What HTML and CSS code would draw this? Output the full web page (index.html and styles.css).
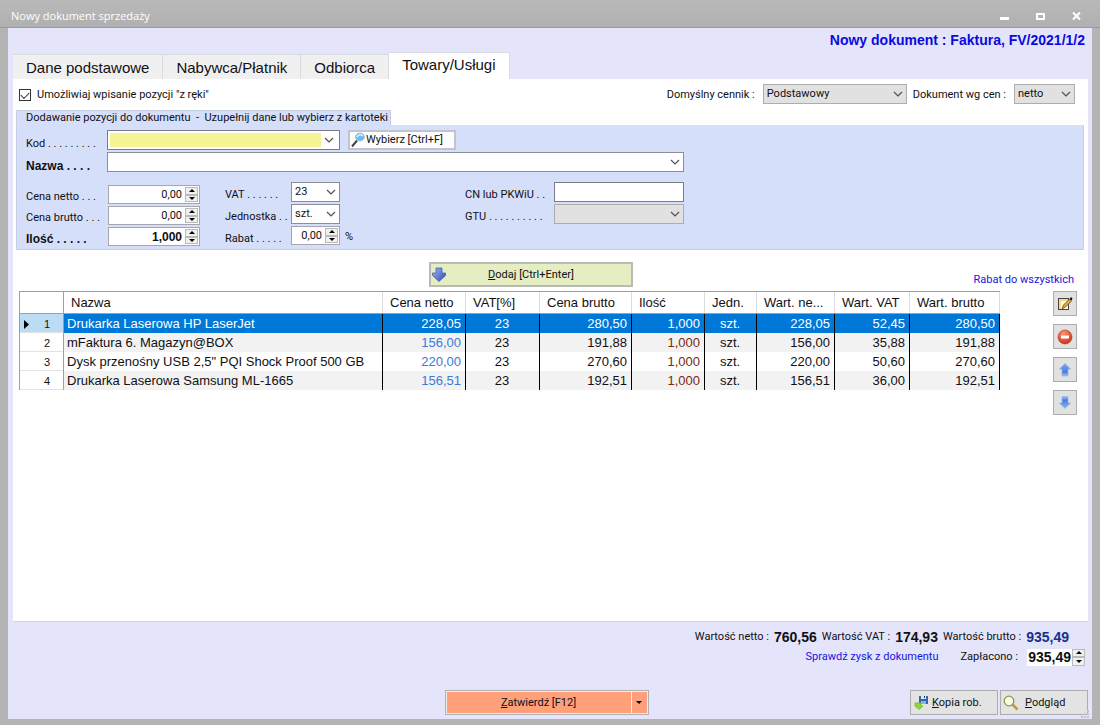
FILE: index.html
```html
<!DOCTYPE html>
<html lang="pl">
<head>
<meta charset="utf-8">
<title>Nowy dokument sprzedaży</title>
<link rel="stylesheet" href="styles.css">
</head>
<body>
<svg class="defs" width="0" height="0" aria-hidden="true">
  <defs>
    <linearGradient id="blue" x1="0" y1="0" x2="1" y2="1"><stop offset="0" stop-color="#a4b8f0"/><stop offset="1" stop-color="#2c48b8"/></linearGradient>
    <linearGradient id="up" x1="0" y1="0" x2="0" y2="1"><stop offset="0" stop-color="#7ea8ec"/><stop offset=".7" stop-color="#4a7cdc"/><stop offset="1" stop-color="#a9c6f4"/></linearGradient>
    <linearGradient id="down" x1="0" y1="0" x2="0" y2="1"><stop offset="0" stop-color="#a9c6f4"/><stop offset=".3" stop-color="#4a7cdc"/><stop offset="1" stop-color="#8db6f0"/></linearGradient>
    <radialGradient id="red" cx=".4" cy=".25" r=".8"><stop offset="0" stop-color="#ff9470"/><stop offset="1" stop-color="#cc2a14"/></radialGradient>
    <symbol id="chevron" viewBox="0 0 10 6"><path d="M1 1l4 4 4-4" fill="none" stroke="#505050" stroke-width="1.2"/></symbol>
    <symbol id="tri-up" viewBox="0 0 6 3"><path d="M3 0l3 3H0z"/></symbol>
    <symbol id="tri-down" viewBox="0 0 6 3"><path d="M0 0h6L3 3z"/></symbol>
  </defs>
</svg>

<header class="titlebar">
  <h1 class="titlebar-text">Nowy dokument sprzedaży</h1>
  <div class="window-buttons">
    <button type="button" aria-label="Minimalizuj"><svg width="10" height="10"><rect x="1" y="6" width="9" height="3" fill="#fff"/></svg></button>
    <button type="button" aria-label="Maksymalizuj"><svg width="10" height="10"><rect x="2" y="3" width="7" height="5" fill="none" stroke="#fff" stroke-width="2"/></svg></button>
    <button type="button" aria-label="Zamknij"><svg width="10" height="10"><path d="M2 1.500l7 7M9 1.500l-7 7" stroke="#fff" stroke-width="2"/></svg></button>
  </div>
</header>

<main class="window">
  <p class="doc-title">Nowy dokument : Faktura, FV/2021/1/2</p>
  <div class="tabs" role="tablist">
    <button type="button" role="tab" class="tab">Dane podstawowe</button>
    <button type="button" role="tab" class="tab">Nabywca/Płatnik</button>
    <button type="button" role="tab" class="tab">Odbiorca</button>
    <button type="button" role="tab" class="tab active" aria-selected="true">Towary/Usługi</button>
  </div>

  <section class="page">
    <div class="options">
      <label class="check"><input type="checkbox" checked><span>Umożliwiaj wpisanie pozycji "z ręki"</span></label>
      <div class="options-right">
        <label for="pricelist">Domyślny cennik :</label>
        <span class="select gray w-pricelist"><select id="pricelist"><option>Podstawowy</option></select><svg><use href="#chevron"/></svg></span>
        <label for="basis">Dokument wg cen :</label>
        <span class="select gray w-basis"><select id="basis"><option>netto</option></select><svg><use href="#chevron"/></svg></span>
      </div>
    </div>

    <h2 class="group-tab">Dodawanie pozycji do dokumentu&nbsp; -&nbsp; Uzupełnij dane lub wybierz z kartoteki</h2>
    <form class="group">
      <div class="row">
        <label for="code" class="c1">Kod . . . . . . . . .</label>
        <span class="combo"><input id="code" type="text"><button type="button" aria-label="Rozwiń"><svg width="10" height="6"><use href="#chevron"/></svg></button></span>
        <button type="button" class="pick">
          <svg width="14" height="16" viewBox="0 0 14 16"><path d="M1 14.500L6 8.500" stroke="#444" stroke-width="2"/><ellipse cx="9" cy="5" rx="4.500" ry="4" fill="#6fb8e8" stroke="#a9cbe0"/><path d="M6 5q3-4 6-1" fill="none" stroke="#dff2ff" stroke-width="1.500"/></svg>
          <span>Wybierz [Ctrl+F]</span>
        </button>
      </div>
      <div class="row">
        <label for="name" class="c1 bold">Nazwa . . . .</label>
        <span class="select w-name"><select id="name"><option></option></select><svg><use href="#chevron"/></svg></span>
      </div>
      <div class="fields">
        <div class="col prices">
          <label for="net">Cena netto . . .</label><span class="spin"><input id="net" type="text" value="0,00"><span class="arrows"><button type="button" aria-label="Więcej"><svg><use href="#tri-up"/></svg></button><button type="button" aria-label="Mniej"><svg><use href="#tri-down"/></svg></button></span></span>
          <label for="gross">Cena brutto . . .</label><span class="spin"><input id="gross" type="text" value="0,00"><span class="arrows"><button type="button" aria-label="Więcej"><svg><use href="#tri-up"/></svg></button><button type="button" aria-label="Mniej"><svg><use href="#tri-down"/></svg></button></span></span>
          <label for="qty" class="bold">Ilość . . . . .</label><span class="spin bold"><input id="qty" type="text" value="1,000"><span class="arrows"><button type="button" aria-label="Więcej"><svg><use href="#tri-up"/></svg></button><button type="button" aria-label="Mniej"><svg><use href="#tri-down"/></svg></button></span></span>
        </div>
        <div class="col units">
          <label for="vat">VAT . . . . . .</label><span class="select"><select id="vat"><option>23</option></select><svg><use href="#chevron"/></svg></span><span></span>
          <label for="unit">Jednostka . .</label><span class="select"><select id="unit"><option>szt.</option></select><svg><use href="#chevron"/></svg></span><span></span>
          <label for="discount">Rabat . . . . .</label><span class="spin"><input id="discount" type="text" value="0,00"><span class="arrows"><button type="button" aria-label="Więcej"><svg><use href="#tri-up"/></svg></button><button type="button" aria-label="Mniej"><svg><use href="#tri-down"/></svg></button></span></span><span class="pct">%</span>
        </div>
        <div class="col codes">
          <label for="cn">CN lub PKWiU . .</label><input id="cn" class="box" type="text">
          <label for="gtu">GTU . . . . . . . . . .</label><span class="select gray"><select id="gtu"><option></option></select><svg><use href="#chevron"/></svg></span>
        </div>
      </div>
    </form>

    <div class="add-row">
      <button type="button" class="add">
        <svg width="14" height="15" viewBox="0 0 14 15"><path d="M4 1h6v5h3.500v2.500L7 14.500.500 8.500V6H4z" fill="url(#blue)" stroke="#4a5cb4" stroke-width=".8"/></svg>
        <span><u>D</u>odaj [Ctrl+Enter]</span>
      </button>
      <a href="#rabat" class="discount-link">Rabat do wszystkich</a>
    </div>

    <div class="grid-row">
      <table class="items">
        <colgroup><col class="k-no"><col><col class="k-net"><col class="k-vat"><col class="k-gross"><col class="k-qty"><col class="k-unit"><col class="k-vnet"><col class="k-vvat"><col class="k-vgross"></colgroup>
        <thead><tr><th></th><th>Nazwa</th><th>Cena netto</th><th>VAT[%]</th><th>Cena brutto</th><th>Ilość</th><th>Jedn.</th><th>Wart. ne...</th><th>Wart. VAT</th><th>Wart. brutto</th></tr></thead>
        <tbody>
          <tr class="selected"><th scope="row"><svg class="marker" width="5" height="9" viewBox="0 0 5 9"><path d="M0 0l5 4.500L0 9z"/></svg>1</th><td>Drukarka Laserowa HP LaserJet</td><td>228,05</td><td>23</td><td>280,50</td><td>1,000</td><td>szt.</td><td>228,05</td><td>52,45</td><td>280,50</td></tr>
          <tr><th scope="row">2</th><td>mFaktura 6. Magazyn@BOX</td><td>156,00</td><td>23</td><td>191,88</td><td>1,000</td><td>szt.</td><td>156,00</td><td>35,88</td><td>191,88</td></tr>
          <tr><th scope="row">3</th><td>Dysk przenośny USB 2,5" PQI Shock Proof 500 GB</td><td>220,00</td><td>23</td><td>270,60</td><td>1,000</td><td>szt.</td><td>220,00</td><td>50,60</td><td>270,60</td></tr>
          <tr><th scope="row">4</th><td>Drukarka Laserowa Samsung ML-1665</td><td>156,51</td><td>23</td><td>192,51</td><td>1,000</td><td>szt.</td><td>156,51</td><td>36,00</td><td>192,51</td></tr>
        </tbody>
      </table>
      <div class="tools">
        <button type="button" aria-label="Edytuj"><svg width="16" height="16" viewBox="0 0 16 16"><rect x="1.500" y="2.500" width="10" height="11" fill="#fffbe4" stroke="#444"/><path d="M2 3h9v2H2zM2 3h2v10H2z" fill="#f3dc7c"/><path d="M5 13l1.500-4 6-6 2 2-6 6z" fill="#dca658" stroke="#6e4a1c" stroke-width=".8"/><path d="M12.500 3l1.500-2 1.500 1.500-1 2z" fill="#111"/></svg></button>
        <button type="button" aria-label="Usuń"><svg width="16" height="16" viewBox="0 0 16 16"><circle cx="8" cy="8" r="7" fill="url(#red)" stroke="#b8301c" stroke-width=".6"/><rect x="4" y="6.500" width="8" height="3" fill="#fff"/></svg></button>
        <button type="button" aria-label="W górę"><svg width="14" height="16" viewBox="0 0 14 16"><path d="M7 1.500l5.500 5.500H10v7H4V7H1.500z" fill="url(#up)" stroke="#8fb0e8" stroke-width=".7"/></svg></button>
        <button type="button" aria-label="W dół"><svg width="14" height="16" viewBox="0 0 14 16"><path d="M7 13.500L12.500 8H10V1.500H4V8H1.500z" fill="url(#down)" stroke="#8fb0e8" stroke-width=".7"/></svg></button>
      </div>
    </div>
  </section>

  <footer class="footer">
    <div class="sums">
      <span>Wartość netto :</span><output>760,56</output>
      <span>Wartość VAT :</span><output>174,93</output>
      <span>Wartość brutto :</span><output class="total">935,49</output>
    </div>
    <div class="paid">
      <a href="#zysk">Sprawdź zysk z dokumentu</a>
      <label for="paid">Zapłacono :</label>
      <span class="spin paid-spin"><input id="paid" type="text" value="935,49"><span class="arrows"><button type="button" aria-label="Więcej"><svg><use href="#tri-up"/></svg></button><button type="button" aria-label="Mniej"><svg><use href="#tri-down"/></svg></button></span></span>
    </div>
    <div class="actions">
      <div class="split">
        <button type="button" class="confirm"><u>Z</u>atwierdź [F12]</button>
        <button type="button" class="more" aria-label="Więcej opcji"><svg><use href="#tri-down"/></svg></button>
      </div>
      <div class="actions-right">
        <button type="button" class="act copy"><svg width="15" height="15" viewBox="0 0 15 15"><path d="M5 1h9v8H5z" fill="#2f69b4"/><path d="M7 1h5v3H7z" fill="#dce9f7"/><path d="M10 1h1v2h-1z" fill="#234"/><path d="M7 6h5v3H7z" fill="#88b4e4"/><path d="M1 8h6v3h2l-4 3.500L1 11z" fill="#8dd838" stroke="#72bc2c" stroke-width=".8"/></svg><span><u>K</u>opia rob.</span></button>
        <button type="button" class="act preview"><svg width="16" height="16" viewBox="0 0 16 16"><path d="M9.500 9.500l5 5" stroke="#c9962e" stroke-width="2.500"/><circle cx="6" cy="6" r="4.800" fill="#fafbe2" stroke="#8f9558" stroke-width="1.300"/></svg><span><u>P</u>odgląd</span></button>
      </div>
    </div>
    <svg class="grip" width="8" height="8"><path d="M6 0h2v2H6zM3 3h2v2H3zM6 3h2v2H6zM0 6h2v2H0zM3 6h2v2H3zM6 6h2v2H6z" fill="#c2c2d2"/></svg>
  </footer>
</main>
</body>
</html>
```
FILE: styles.css
```css
* { box-sizing: border-box; }
body {
  margin: 0;
  min-height: 100vh;
  display: flex;
  flex-direction: column;
  background: #b4b4b4;
  color: #101014;
  font: 11px/16px Roboto, "Liberation Sans", sans-serif;
}
.defs { position: absolute; }
h1, h2, p { margin: 0; font-weight: normal; }
button, input, select { font: inherit; color: inherit; margin: 0; padding: 0; border: 0; border-radius: 0; background: none; }
button { display: flex; align-items: center; justify-content: center; }
button, label, a { white-space: nowrap; }
a { color: #1616e0; text-decoration: none; }

.titlebar { display: flex; align-items: center; justify-content: space-between; height: 28px; padding: 4px 19px 0 11px; background: linear-gradient(#b9b9b9, #b0b0b0); border-bottom: 1px solid #9a9a9e; }
.titlebar-text { font: 11px/16px "Open Sans", sans-serif; color: #fff; }
.window-buttons { display: flex; gap: 26px; }

.window { flex: 1; display: flex; flex-direction: column; margin: 0 8px 6px; padding: 0 4px 0 5px; background: #e4e4fa; }
.doc-title { padding: 3px 3px 0 0; text-align: right; font: bold 14px/18px "Liberation Sans", sans-serif; color: #0a0ae0; }

.tabs { display: flex; align-items: flex-end; margin-top: 2px; height: 28px; }
.tab { height: 25px; padding: 1px 13px 0; background: #f0f0f0; border: 1px solid #dadae2; border-width: 1px 1px 0 0; font: 15px/20px "Liberation Sans", sans-serif; }
.tab.active { height: 27px; background: #fff; padding: 0 13px 3px; }

.page { flex: 1; display: flex; flex-direction: column; background: #fff; border-bottom: 1px solid #d4d4dc; padding: 5px 4px 0 3px; }
.options { display: flex; justify-content: space-between; align-items: center; height: 20px; padding: 0 9px 0 3px; }
.check { display: flex; align-items: center; gap: 6px; padding-top: 2px; }
.check input { appearance: none; width: 12px; height: 12px; border: 1px solid #333; background: #fff; display: grid; place-items: center; }
.check input:checked::before { content: ""; width: 7px; height: 4px; border: solid #333; border-width: 0 0 1px 1px; transform: rotate(-45deg); margin-bottom: 2px; }
.options-right { display: flex; align-items: center; }
.options-right label { padding: 2px 8px 0 6px; }

.select { position: relative; display: flex; height: 20px; background: #fff; border: 1px solid #8a8e98; }
.select select { appearance: none; flex: 1; min-width: 0; padding: 0 16px 0 3px; outline: 0; }
.select svg { position: absolute; right: 3px; top: 6px; width: 10px; height: 6px; pointer-events: none; }
.gray { background: #e1e1e1; border-color: #adadad; }
.w-pricelist { width: 144px; }
.w-basis { width: 61px; }
.w-name { width: 577px; }

.group-tab { align-self: flex-start; margin-top: 6px; padding: 0 2px 0 9px; background: #d6dffa; border: 1px solid #c6cee4; border-width: 1px 1px 0 1px; font-size: 11px; line-height: 14px; }
.group { display: flex; flex-direction: column; gap: 2px; padding: 4px 0 3px 9px; background: #d6dffa; border: 1px solid #c6cee4; border-top-color: #d6dffa; }
.row { display: flex; height: 20px; }
.row label { padding-top: 6px; }
.c1 { width: 81px; flex: none; }
.bold { font-family: "Liberation Sans", sans-serif; font-weight: bold; font-size: 12px; }
.combo { display: flex; width: 233px; height: 20px; padding: 2px; background: #fff; border: 1px solid #7a7e88; }
.combo input { flex: 1; min-width: 0; background: #f4f494; }
.combo button { width: 16px; }
.pick { width: 108px; height: 20px; margin-left: 8px; padding-left: 1px; gap: 1px; justify-content: flex-start; background: #fdfdfd; border: 2px solid #c0c4cc; }
.fields { display: flex; align-items: flex-start; padding-top: 8px; }
.col { display: grid; gap: 2px 0; }
.col label { padding-top: 5px; }
.prices { grid-template-columns: 82px 92px; grid-auto-rows: 19px; padding-top: 3px; }
.prices label { padding-top: 4px; }
.units { grid-template-columns: 66px 49px auto; grid-auto-rows: 20px; margin-left: 25px; }
.units .spin { height: 19px; }
.codes { grid-template-columns: 89px 130px; grid-auto-rows: 20px; margin-left: 112px; }
.pct { padding: 3px 0 0 5px; }
.box { width: 100%; background: #fff; border: 1px solid #7a7e88; }
.spin { display: flex; background: #fff; border: 1px solid #a6a6ac; }
.spin input { flex: 1; min-width: 0; text-align: right; padding-right: 2px; }
.arrows { width: 13px; margin: 1px; display: flex; flex-direction: column; }
.arrows button { flex: 1; background: #f0f0f0; border: 1px solid #bababa; }
.arrows svg, .more svg { width: 6px; height: 3px; }

.add-row { display: grid; grid-template-columns: 1fr 204px 1fr; margin-top: 12px; padding-right: 10px; }
.add { grid-column: 2; height: 25px; position: relative; background: #e5edc3; border: 2px solid #b8bab4; margin-left: -14px; margin-right: 14px; }
.add svg { position: absolute; left: 1px; top: 3px; }
.discount-link { justify-self: end; align-self: end; line-height: 14px; }

.grid-row { display: flex; justify-content: space-between; align-items: flex-start; margin-top: 4px; padding: 0 7px 0 3px; gap: 53px; }
.items { flex: 1; min-width: 0; table-layout: fixed; border-collapse: separate; border-spacing: 0; font: 13px/18px "Liberation Sans", sans-serif; }
.k-no { width: 45px; } .k-net { width: 83px; } .k-vat { width: 74px; } .k-gross { width: 92px; } .k-qty { width: 73px; }
.k-unit { width: 52px; } .k-vnet { width: 78px; } .k-vvat { width: 75px; } .k-vgross { width: 90px; }
.items th, .items td { padding: 0 4px 0 3px; white-space: nowrap; overflow: hidden; text-align: right; font-weight: normal; }
.items thead th { height: 23px; padding: 0 0 0 7px; text-align: left; border: 1px solid #a0a0a0; border-width: 1px 0 1px 0; box-shadow: inset -1px 0 #dcdcdc; }
.items thead th:first-child { border-left-width: 1px; box-shadow: inset -1px 0 #a0a0a0; }
.items tbody td { height: 19px; border-right: 1px solid #000; }
.items tbody th { height: 19px; font-size: 11px; padding-right: 13px; border: 1px solid #a0a0a0; border-width: 0 1px 0 1px; box-shadow: inset 0 -1px #e2e2e2; }
.items tbody tr:nth-child(even) td { background: #f2f2f2; }
.items td:nth-child(2) { text-align: left; }
.items td:nth-child(3) { color: #3c7ad8; }
.items td:nth-child(4), .items td:nth-child(7) { text-align: center; }
.items td:nth-child(6) { color: #7a2810; }
.items .selected td { background: #0078d7; color: #fff; }
.items .selected th { background: #bcdcf4; }
.marker { float: left; margin: 5px 0 0 1px; }
.tools { display: flex; flex-direction: column; gap: 8px; }
.tools button { width: 24px; height: 25px; background: #e1e1e1; border: 1px solid #adadad; }

.footer { position: relative; display: flex; flex-direction: column; padding-bottom: 4px; }
.sums { display: flex; justify-content: flex-end; align-items: center; gap: 5px; padding: 4px 19px 0 0; height: 25px; }
.sums output, .paid-spin { font: bold 14px/16px "Liberation Sans", sans-serif; }
.sums .total { color: #14328c; }
.paid { display: flex; justify-content: flex-end; align-items: center; height: 20px; padding-right: 3px; }
.paid label { margin: 0 9px 0 22px; }
.paid-spin { width: 58px; height: 17px; border: 0; }
.paid-spin input { padding-right: 1px; }
.paid-spin .arrows { margin: 0; }
.actions { display: grid; grid-template-columns: 1fr 204px 1fr; align-items: center; margin-top: 23px; }
.split { grid-column: 2; display: flex; gap: 1px; height: 25px; padding: 1px; margin-left: -4px; margin-right: 4px; border: 1px solid #b0b0b4; background: #f4ede4; }
.split button { background: #ffa07a; }
.confirm { flex: 1; }
.more { width: 15px; }
.actions-right { display: flex; justify-content: flex-end; gap: 2px; }
.act { width: 88px; height: 25px; padding-left: 3px; justify-content: flex-start; gap: 3px; background: #e3e3e3; border: 1px solid #adadad; }
.preview { gap: 6px; padding-left: 2px; }
.grip { position: absolute; right: -1px; bottom: 1px; }
```
